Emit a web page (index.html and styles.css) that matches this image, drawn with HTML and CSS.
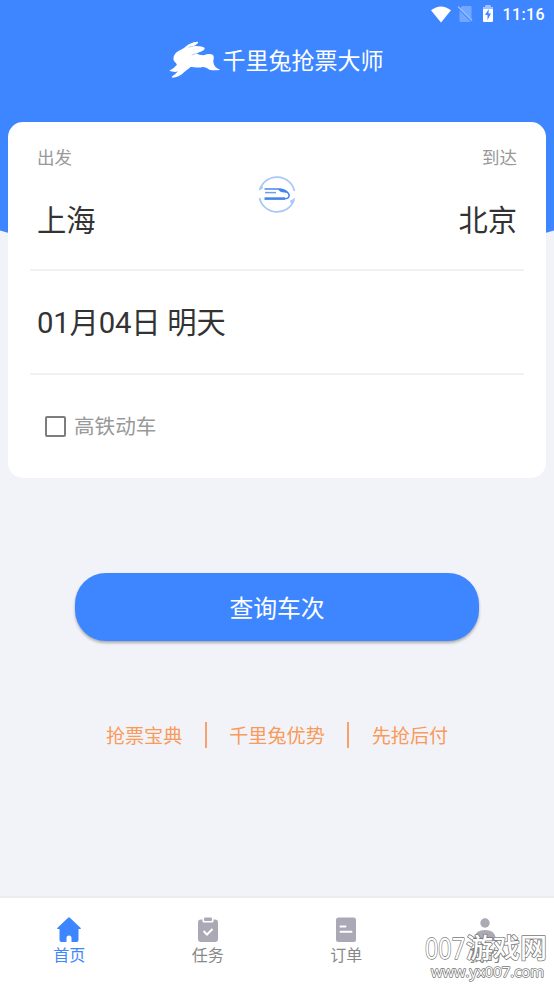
FILE: index.html
```html
<!DOCTYPE html>
<html lang="zh-CN">
<head>
<meta charset="utf-8">
<title>千里兔抢票大师</title>
<link rel="stylesheet" href="styles.css">
</head>
<body>
<div class="app">
  <header class="hero">
    <div class="status">
      <svg class="wifi" width="22" height="17" viewBox="0 0 22 17"><path d="M1 4.2Q11-3.4 21 4.2L11 16.5Z" fill="#fff"/></svg>
      <svg class="sim" width="16" height="18" viewBox="0 0 16 18"><path d="M5 1h8.500q1 0 1 1v14q0 1-1 1h-10q-1 0-1-1V4Z" fill="#72a7ff"/><path d="M1 2.500l14 14" stroke="#3e86ff" stroke-width="2"/><path d="M1 1.500l14 14" stroke="#9bc1ff" stroke-width="1.300"/></svg>
      <svg class="battery" width="12" height="18" viewBox="0 0 12 18"><path d="M3.500 2V.5h5V2H10q1 0 1 1v13q0 1-1 1H2q-1 0-1-1V3q0-1 1-1Z" fill="#fff"/><path d="M3.500 2V.5h5V2H10q1 0 1 1v1H1V3q0-1 1-1Z" fill="#9bc1ff"/><path d="M6.800 4L3 10h2.500v5L9 8.500H6.500Z" fill="#3e86ff"/></svg>
      <span>11:16</span>
    </div>
    <div class="brand">
      <svg width="52" height="39" viewBox="30 30 156 117"><path d="M47 95C40 88 44 73 54 66C62 60 70 57 76 53C84 44 103 34 117 35C119 40 111 44 103 49C115 47 130 49 137 54C138 60 128 65 112 70C117 74 125 76 134 76C144 72 154 71 161 74C167 80 163 87 163 96C164 107 171 115 184 119C169 122 151 121 147 116C141 113 137 112 132 111C117 115 104 111 95 111C89 117 82 120 76 126C65 138 52 143 40 143C36 140 42 138 48 133L57 124C46 128 39 124 31 122C37 119 45 115 50 108C56 104 53 101 47 95Z" fill="#fff"/><path d="M89 52Q96 49 103 49M98 75Q105 73 112 70" fill="none" stroke="#3e86ff" stroke-width="1.200"/></svg>
      <h1>千里兔抢票大师</h1>
    </div>
  </header>
  <main>
    <section class="card">
      <div class="route">
        <div class="place"><span class="label">出发</span><span class="value">上海</span></div>
        <svg class="train" width="38" height="38" viewBox="0 0 38 38" fill="none">
          <path d="M1.700 14A18 18 0 0 1 36.500 15M1.500 22A18 18 0 0 0 36 24" stroke="#a9c7f8" stroke-width="1.700"/>
          <path d="M1.500 14l1.500-4 2 1.500ZM36.500 22.500l-4.500 3 2.500 2Z" fill="#a9c7f8" stroke="#a9c7f8"/>
          <path d="M6.500 13H22Q29 14 31 18.500Q32 22.500 27 22.800" stroke="#4884ed" stroke-width="1.600"/>
          <path d="M20 13Q27 13 29.500 17L23 16Q21 15 20 13Z" fill="#4884ed"/>
          <path d="M7 16.600H18" stroke="#6b9df2" stroke-width="1.500"/><path d="M6.500 22.600H27" stroke="#4884ed" stroke-width="2.600"/>
        </svg>
        <div class="place arrive"><span class="label">到达</span><span class="value">北京</span></div>
      </div>
      <div class="date">01月04日 明天</div>
      <div class="filter"><span class="checkbox"></span><span>高铁动车</span></div>
    </section>
    <button class="search">查询车次</button>
    <nav class="links"><a>抢票宝典</a><i></i><a>千里兔优势</a><i></i><a>先抢后付</a></nav>
  </main>
  <footer class="tabs">
    <div class="tab active"><svg width="26" height="26" viewBox="0 0 26 26"><path d="M12.100.7q.9-.8 1.800 0L24.700 11q.7.800-.5.900H22.500V23q0 2-2 2h-5v-4q0-2.500-2.500-2.500T10.500 21v4h-5q-2 0-2-2V11.900H1.800q-1.200-.1-.5-.9Z" fill="#3e86ff"/></svg><span>首页</span></div>
    <div class="tab"><svg width="26" height="26" viewBox="0 0 26 26"><path d="M6 2.500h1.500v2q0 1 1 1h9q1 0 1-1v-2H20q3 0 3 3V22q0 3-3 3H6q-3 0-3-3V5.500q0-3 3-3Z" fill="#aaa9b5"/><rect x="9" y=".5" width="8" height="3.500" rx="1" fill="#aaa9b5"/><path d="M8.500 14l3.500 3.500 5.500-5.500" fill="none" stroke="#fff" stroke-width="2"/></svg><span>任务</span></div>
    <div class="tab"><svg width="26" height="26" viewBox="0 0 26 26"><rect x="3" y=".5" width="20" height="24.500" rx="2.500" fill="#aaa9b5"/><path d="M7.500 9.500h5M7.500 14.800h11" stroke="#fff" stroke-width="2" stroke-linecap="round"/></svg><span>订单</span></div>
    <div class="tab"><svg width="26" height="26" viewBox="0 0 26 26"><circle cx="13" cy="6" r="4.700" fill="#aaa9b5"/><path d="M2 24Q2 13 13 13T24 24Z" fill="#aaa9b5"/></svg><span>我的</span></div>
  </footer>
  <svg class="watermark" width="132" height="56" viewBox="0 0 132 56">
    <g class="mark"><text class="mark-name" y="31"><tspan class="digits" x="4" textLength="40" lengthAdjust="spacingAndGlyphs">007</tspan><tspan x="45" y="30">游戏网</tspan></text><text class="mark-url" x="10" y="49" textLength="113" lengthAdjust="spacingAndGlyphs">www.yx007.com</text></g>
  </svg>
</div>
</body>
</html>
```
FILE: styles.css
```css
* { box-sizing: border-box; }
body { margin: 0; font-family: Roboto, "Noto Sans CJK SC", sans-serif; }
.app { position: relative; width: 554px; height: 986px; display: flex; flex-direction: column; background: #f2f3f8; overflow: hidden; }
.hero { height: 271px; flex: none; background: #3e86ff; color: #fff; clip-path: circle(965px at 50% -694px); }
.status { height: 28px; display: flex; justify-content: flex-end; align-items: center; padding-right: 9px; font-size: 16px; font-weight: 500; letter-spacing: .4px; }
.wifi { margin-right: 5px; }
.sim { margin-right: 9px; }
.battery { margin-right: 8px; }
.brand { height: 64px; display: flex; align-items: center; justify-content: center; }
.brand svg { margin: -2px 2px 0 -2px; }
h1 { margin: 3px 0 0; font-size: 23px; font-weight: 400; line-height: 34px; }
main { flex: 1; display: flex; flex-direction: column; align-items: center; margin-top: -149px; position: relative; }
.card { width: 538px; height: 356px; padding: 0 22px; background: #fff; border-radius: 15px; }
.route { height: 149px; padding: 23px 7px 0; display: flex; justify-content: space-between; border-bottom: 2px solid #f1f1f2; }
.place { width: 120px; display: flex; flex-direction: column; }
.arrive { align-items: flex-end; }
.label { font-size: 17.500px; line-height: 26px; color: #999; }
.value { margin-top: 29px; font-size: 29.300px; line-height: 42px; color: #333; }
.train { margin: 31px 0 0; }
.date { height: 104px; padding: 0 7px; border-bottom: 2px solid #f1f1f2; font-size: 29.300px; letter-spacing: -.2px; line-height: 105px; color: #333; white-space: pre; }
.filter { height: 102px; padding-left: 15px; display: flex; align-items: center; gap: 8px; font-size: 20.600px; color: #999; }
.filter span:last-child { margin-top: -2px; }
.checkbox { width: 21px; height: 21px; border: 2px solid #7d7d7d; border-radius: 2px; }
.search { width: 404px; height: 68px; margin: 95px 0 0; padding: 0 0 1px; border: 0; border-radius: 31px; background: #3e86ff; box-shadow: 0 2px 3px rgba(0,0,0,.3); color: #fff; font: inherit; font-size: 23.800px; }
.links { margin-top: 80px; height: 28px; display: flex; align-items: center; gap: 22.500px; font-size: 19.100px; line-height: 28px; color: #f99a59; }
.links a { margin-top: 3px; }
.links i { width: 2px; height: 26px; background: #f5a26b; }
.tabs { height: 90px; flex: none; display: grid; grid-template-columns: repeat(4, 1fr); background: #fff; border-top: 2px solid #ebecf0; }
.tab { display: flex; flex-direction: column; align-items: center; padding-top: 19px; font-size: 16px; line-height: 26px; color: #888; }
.active { color: #3e86ff; }
.watermark { position: absolute; left: 421px; top: 928px; }
.mark { fill: #fff; stroke: #777; stroke-width: 1.500px; paint-order: stroke; stroke-linejoin: round; }
.mark-name { font: 500 27px "Open Sans", "Noto Sans CJK SC", sans-serif; }
.digits { font-size: 30px; }
.mark-url { font: 500 15px "Open Sans", sans-serif; }
```
